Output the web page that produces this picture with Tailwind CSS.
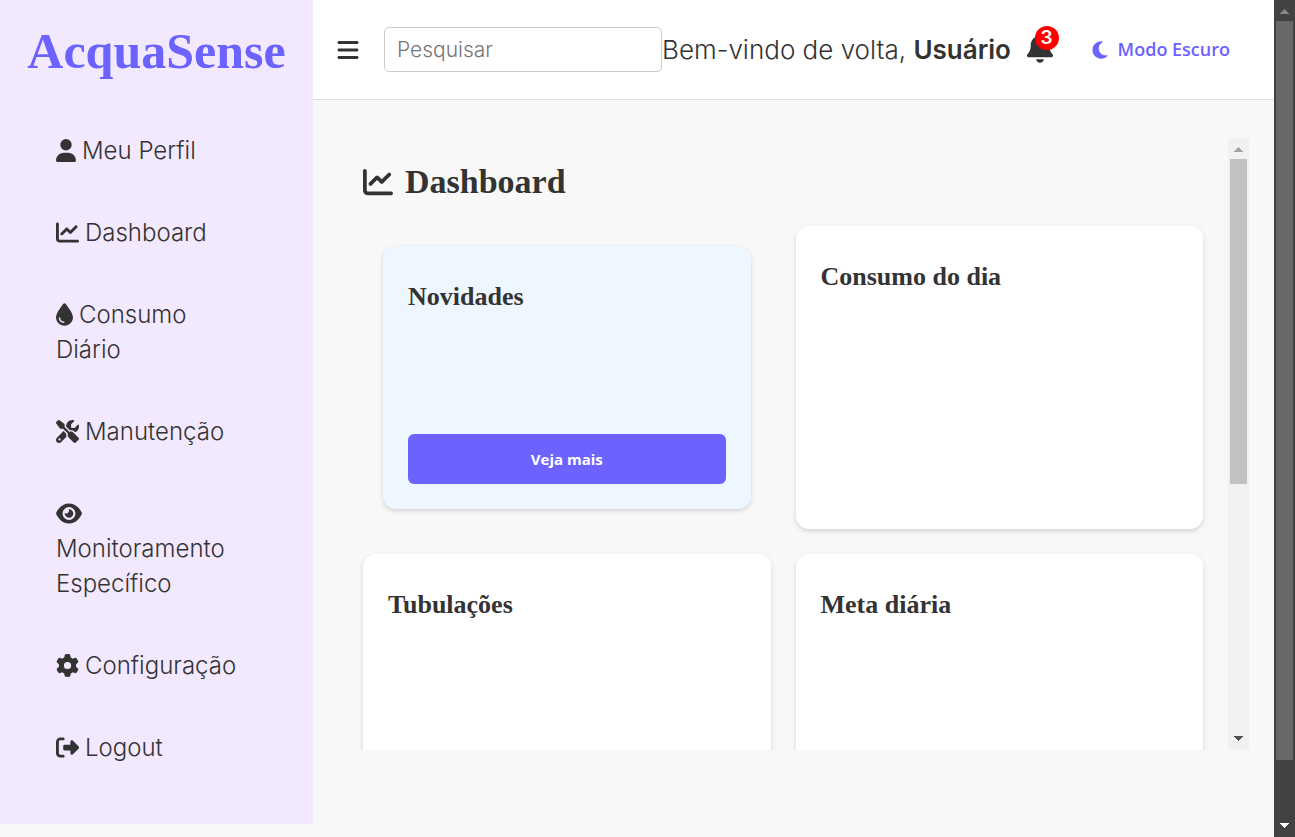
<!DOCTYPE html>
<html lang="pt-BR">
<head>
<meta charset="utf-8">
<meta name="viewport" content="width=device-width, initial-scale=1">
<title>AcquaSense</title>
<script src="https://cdn.jsdelivr.net/npm/@tailwindcss/browser@4"></script>
</head>
<body class="flex h-screen overflow-hidden bg-[#f8f8f8] font-['Inter','Open_Sans',sans-serif] text-[#333]">
<div class="flex min-w-0 flex-1 items-start overflow-hidden">

  <aside class="w-[313px] shrink-0 bg-[#f3e9ff] pb-[59px]">
    <h1 class="pt-5 text-center font-['Liberation_Serif',serif] text-[50px] leading-[63px] font-bold text-[#6c63ff]">AcquaSense</h1>
    <nav class="pt-[50px] pr-12 pl-14 text-[24px] leading-[35px] font-light">
      <ul class="flex flex-col gap-[47px]">
        <li><a href="#"><svg class="mr-[6px] inline-block h-[23px] w-[20px] align-[-3px]" viewBox="0 0 448 512" fill="currentColor"><path d="M224 256A128 128 0 1 0 224 0a128 128 0 1 0 0 256zm-45.700 48C79.800 304 0 383.800 0 482.300C0 498.700 13.300 512 29.700 512H418.300c16.400 0 29.700-13.300 29.700-29.700C448 383.800 368.200 304 269.700 304H178.300z"/></svg>Meu Perfil</a></li>
        <li><a href="#"><svg class="mr-[6px] inline-block h-[23px] w-[23px] align-[-3px]" viewBox="0 0 512 512" fill="currentColor"><path d="M64 64c0-17.700-14.300-32-32-32S0 46.300 0 64V400c0 44.200 35.800 80 80 80H480c17.700 0 32-14.300 32-32s-14.300-32-32-32H80c-8.800 0-16-7.200-16-16V64zm406.600 86.600c12.500-12.500 12.500-32.800 0-45.300s-32.800-12.500-45.300 0L320 210.700l-57.400-57.400c-12.500-12.500-32.800-12.500-45.300 0l-112 112c-12.500 12.500-12.500 32.800 0 45.300s32.800 12.500 45.300 0L240 221.300l57.400 57.400c12.500 12.500 32.800 12.500 45.300 0l128-128z"/></svg>Dashboard</a></li>
        <li><a href="#"><svg class="mr-[6px] inline-block h-[23px] w-[17px] align-[-3px]" viewBox="0 0 384 512" fill="currentColor"><path d="M192 512C86 512 0 426 0 320C0 228.800 130.200 57.700 166.600 11.700C172.600 4.200 181.500 0 191.100 0h1.800c9.600 0 18.500 4.200 24.500 11.700C253.800 57.700 384 228.800 384 320c0 106-86 192-192 192zM96 336c0-8.800-7.200-16-16-16s-16 7.200-16 16c0 61.900 50.100 112 112 112c8.800 0 16-7.200 16-16s-7.200-16-16-16c-44.200 0-80-35.800-80-80z"/></svg>Consumo<br>Diário</a></li>
        <li><a href="#"><svg class="mr-[6px] inline-block h-[23px] w-[23px] align-[-3px]" viewBox="0 0 512 512" fill="currentColor"><path d="M78.600 5C69.100-2.400 55.600-1.500 47 7L7 47c-8.500 8.500-9.400 22-2.100 31.600l80 104c4.500 5.900 11.600 9.400 19 9.400h54.100l109 109c-14.700 29-10 65.400 14.300 89.600l112 112c12.500 12.500 32.800 12.500 45.300 0l64-64c12.500-12.500 12.500-32.800 0-45.300l-112-112c-24.200-24.200-60.600-29-89.600-14.300l-109-109V104c0-7.500-3.500-14.500-9.400-19L78.600 5zM19.900 396.100C7.200 408.800 0 426.100 0 444.100C0 481.600 30.400 512 67.900 512c18 0 35.300-7.200 48-19.900L233.700 374.300c-7.800-20.900-9-43.600-3.600-65.100l-61.700-61.700L19.900 396.100zM512 144c0-10.500-1.100-20.700-3.200-30.500c-2.400-11.200-16.100-14.100-24.200-6l-63.900 63.900c-3 3-7.100 4.700-11.300 4.700H352c-8.800 0-16-7.200-16-16V102.600c0-4.200 1.700-8.300 4.700-11.300l63.900-63.900c8.100-8.100 5.200-21.800-6-24.200C388.700 1.100 378.500 0 368 0C288.500 0 224 64.500 224 144l0 .8 85.300 85.300c36-9.100 75.800 .5 104 28.700L429 274.500c49-23 83-72.800 83-130.500zM56 432a24 24 0 1 1 48 0 24 24 0 1 1 -48 0z"/></svg>Manutenção</a></li>
        <li><a href="#"><svg class="inline-block h-[23px] w-[26px] align-[-3px]" viewBox="0 0 576 512" fill="currentColor"><path d="M288 32c-80.800 0-145.500 36.800-192.600 80.600C48.600 156 17.300 208 2.500 243.700c-3.300 7.900-3.300 16.700 0 24.600C17.300 304 48.600 356 95.400 399.400C142.500 443.200 207.200 480 288 480s145.500-36.800 192.600-80.600c46.800-43.500 78.100-95.400 93-131.100c3.300-7.900 3.300-16.700 0-24.600c-14.900-35.700-46.200-87.700-93-131.100C433.500 68.800 368.800 32 288 32zM144 256a144 144 0 1 1 288 0 144 144 0 1 1 -288 0zm144-64c0 35.300-28.700 64-64 64c-7.100 0-13.900-1.200-20.300-3.300c-5.500-1.800-11.900 1.600-11.700 7.400c.3 6.900 1.300 13.800 3.200 20.700c13.700 51.200 66.400 81.600 117.600 67.900s81.600-66.400 67.900-117.600c-11.100-41.500-47.800-69.400-88.600-71.100c-5.800-.2-9.200 6.100-7.400 11.700c2.100 6.400 3.300 13.200 3.300 20.300z"/></svg><br>Monitoramento<br>Específico</a></li>
        <li><a href="#"><svg class="mr-[6px] inline-block h-[23px] w-[23px] align-[-3px]" viewBox="0 0 512 512" fill="currentColor"><path d="M495.900 166.600c3.200 8.700 .5 18.400-6.400 24.600l-43.300 39.400c1.100 8.300 1.700 16.800 1.700 25.400s-.6 17.100-1.700 25.400l43.300 39.400c6.900 6.200 9.600 15.900 6.400 24.600c-4.400 11.900-9.700 23.300-15.800 34.300l-4.700 8.100c-6.600 11-14 21.400-22.100 31.200c-5.900 7.200-15.700 9.600-24.500 6.800l-55.700-17.700c-13.400 10.300-28.200 18.900-44 25.400l-12.500 57.100c-2 9.100-9 16.300-18.200 17.800c-13.800 2.300-28 3.500-42.500 3.500s-28.700-1.200-42.500-3.500c-9.200-1.500-16.200-8.700-18.200-17.800l-12.500-57.100c-15.800-6.500-30.600-15.100-44-25.400L83.100 425.900c-8.800 2.800-18.600 .3-24.500-6.800c-8.100-9.800-15.500-20.200-22.100-31.200l-4.700-8.100c-6.100-11-11.400-22.400-15.800-34.300c-3.200-8.700-.5-18.400 6.400-24.600l43.300-39.400C64.600 273.100 64 264.600 64 256s.6-17.100 1.700-25.400L22.400 191.200c-6.900-6.200-9.600-15.900-6.400-24.600c4.400-11.900 9.700-23.300 15.800-34.300l4.700-8.100c6.600-11 14-21.400 22.100-31.200c5.900-7.200 15.700-9.600 24.500-6.800l55.700 17.700c13.400-10.300 28.200-18.900 44-25.400l12.500-57.100c2-9.100 9-16.300 18.200-17.800C227.300 1.200 241.500 0 256 0s28.700 1.200 42.500 3.500c9.200 1.500 16.200 8.700 18.200 17.800l12.500 57.100c15.800 6.500 30.600 15.100 44 25.400l55.700-17.700c8.800-2.800 18.600-.3 24.500 6.800c8.100 9.800 15.500 20.200 22.100 31.200l4.700 8.100c6.100 11 11.400 22.400 15.800 34.300zM256 336a80 80 0 1 0 0-160 80 80 0 1 0 0 160z"/></svg>Configuração</a></li>
        <li><a href="#"><svg class="mr-[6px] inline-block h-[23px] w-[23px] align-[-3px]" viewBox="0 0 512 512" fill="currentColor"><path d="M377.900 105.900L500.700 228.700c7.200 7.200 11.300 17.100 11.300 27.300s-4.100 20.100-11.300 27.300L377.900 406.100c-6.400 6.400-15 9.900-24 9.900c-18.700 0-33.900-15.200-33.900-33.900l0-62.100-128 0c-17.700 0-32-14.300-32-32l0-64c0-17.700 14.300-32 32-32l128 0 0-62.100c0-18.700 15.200-33.900 33.900-33.900c9 0 17.600 3.600 24 9.900zM160 96L96 96c-17.700 0-32 14.300-32 32l0 256c0 17.700 14.300 32 32 32l64 0c17.700 0 32 14.300 32 32s-14.300 32-32 32l-64 0c-53 0-96-43-96-96L0 128C0 75 43 32 96 32l64 0c17.700 0 32 14.300 32 32s-14.300 32-32 32z"/></svg>Logout</a></li>
      </ul>
    </nav>
  </aside>

  <div class="min-w-0 flex-1">
    <header class="flex h-[100px] items-center border-b border-[#ddd] bg-white px-6">
      <button type="button" aria-label="Abrir menu" class="mr-[25px]"><svg class="h-6 w-[22px]" viewBox="0 0 448 512" fill="currentColor"><path d="M0 96C0 78.300 14.300 64 32 64H416c17.700 0 32 14.300 32 32s-14.300 32-32 32H32C14.300 128 0 113.700 0 96zM0 256c0-17.700 14.300-32 32-32H416c17.700 0 32 14.300 32 32s-14.300 32-32 32H32c-17.700 0-32-14.300-32-32zM448 416c0 17.700-14.300 32-32 32H32c-17.700 0-32-14.300-32-32s14.300-32 32-32H416c17.700 0 32 14.300 32 32z"/></svg></button>
      <input type="search" aria-label="Pesquisar" placeholder="Pesquisar" class="h-[45px] w-[278px] rounded-[5px] border border-[#ccc] bg-white px-3 text-[21px] font-light placeholder:text-[#757575]">
      <p class="text-[26px] font-light whitespace-nowrap">Bem-vindo de volta, <strong class="font-semibold">Usuário</strong></p>
      <div class="ml-auto flex items-center">
        <button type="button" aria-label="Notificações" class="relative mr-[39px] pb-1"><svg class="h-[30px] w-[26px]" viewBox="0 0 448 512" fill="currentColor"><path d="M224 0c-17.700 0-32 14.300-32 32V51.200C119 66 64 130.600 64 208v18.800c0 47-17.300 92.400-48.500 127.600l-7.400 8.300c-8.400 9.400-10.400 22.900-5.300 34.400S19.400 416 32 416H416c12.600 0 24-7.400 29.200-18.900s3.100-25-5.300-34.400l-7.400-8.300C401.300 319.200 384 273.900 384 226.800V208c0-77.400-55-142-128-156.800V32c0-17.700-14.300-32-32-32zm45.300 493.300c12-12 18.700-28.300 18.700-45.300H224 160c0 17 6.700 33.300 18.700 45.300s28.300 18.700 45.300 18.700s33.300-6.700 45.300-18.700z"/></svg><span class="absolute -top-[7px] -right-[6px] flex size-6 items-center justify-center rounded-full bg-[#f00] text-[19px] leading-none font-semibold text-white">3</span></button>
        <button type="button" class="mr-5 flex items-center gap-[10px] font-['Open_Sans',sans-serif] text-[18px] font-semibold whitespace-nowrap text-[#6c63ff]"><svg class="h-5 w-4" viewBox="0 0 384 512" fill="currentColor"><path d="M223.500 32C100 32 0 132.300 0 256S100 480 223.500 480c60.600 0 115.500-24.200 155.800-63.400c5-4.900 6.300-12.500 3.100-18.700s-10.100-9.700-17-8.500c-9.800 1.700-19.800 2.600-30.100 2.600c-96.900 0-175.500-78.800-175.500-176c0-65.800 36-123.100 89.300-153.300c6.100-3.500 9.200-10.500 7.700-17.300s-7.300-11.900-14.300-12.500c-6.300-.5-12.600-.8-19-.8z"/></svg>Modo Escuro</button>
      </div>
    </header>

    <main class="px-[25px] pt-[38px]">
      <div class="flex h-[612px]">
        <div class="min-w-0 flex-1 overflow-hidden px-[25px] pt-[25px]">
          <h2 class="flex items-center gap-3 font-['Liberation_Serif',serif] text-[34px] leading-[38px] font-bold"><svg class="size-[30px]" viewBox="0 0 512 512" fill="currentColor"><path d="M64 64c0-17.700-14.300-32-32-32S0 46.300 0 64V400c0 44.200 35.800 80 80 80H480c17.700 0 32-14.300 32-32s-14.300-32-32-32H80c-8.800 0-16-7.200-16-16V64zm406.600 86.600c12.500-12.500 12.500-32.800 0-45.300s-32.800-12.500-45.300 0L320 210.700l-57.400-57.400c-12.500-12.500-32.800-12.500-45.300 0l-112 112c-12.500 12.500-12.500 32.800 0 45.300s32.800 12.500 45.300 0L240 221.300l57.400 57.400c12.500 12.500 32.800 12.500 45.300 0l128-128z"/></svg>Dashboard</h2>
          <div class="mt-[25px] grid auto-rows-[303px] grid-cols-2 gap-[25px] font-['Liberation_Serif',serif] text-[26px] leading-[30px] font-bold">
            <section class="m-5 flex flex-col rounded-[13px] bg-[#eef6ff] p-[25px] shadow-[0_2px_5px_rgba(0,0,0,0.15)]">
              <h3 class="pt-[11px]">Novidades</h3>
              <button type="button" class="mt-auto h-[50px] rounded-[6px] bg-[#6c63ff] font-['Open_Sans',sans-serif] text-[15px] font-bold text-white">Veja mais</button>
            </section>
            <section class="rounded-[13px] bg-white p-[25px] shadow-[0_2px_5px_rgba(0,0,0,0.15)]"><h3 class="pt-[11px]">Consumo do dia</h3></section>
            <section class="rounded-[13px] bg-white p-[25px] shadow-[0_2px_5px_rgba(0,0,0,0.15)]"><h3 class="pt-[11px]">Tubulações</h3></section>
            <section class="rounded-[13px] bg-white p-[25px] shadow-[0_2px_5px_rgba(0,0,0,0.15)]"><h3 class="pt-[11px]">Meta diária</h3></section>
          </div>
        </div>
        <!-- Panel scrollbar -->
        <div class="flex w-[21px] shrink-0 flex-col items-center bg-[#f1f1f1]" aria-hidden="true">
          <div class="flex h-[21px] items-center justify-center pt-[2px]"><svg class="h-[5px] w-[9px]" viewBox="0 0 9 5" fill="#a3a3a3" shape-rendering="crispEdges"><path d="M4 0h1v1h1v1h1v1h1v1h1v1H0V4h1V3h1V2h1V1h1z"/></svg></div>
          <div class="h-[325px] w-[17px] bg-[#c1c1c1]"></div>
          <div class="mt-auto flex h-[21px] items-center justify-center pb-[2px]"><svg class="h-[5px] w-[9px]" viewBox="0 0 9 5" fill="#505050" shape-rendering="crispEdges"><path d="M0 0h9v1H8v1H7v1H6v1H5v1H4V4H3V3H2V2H1V1H0z"/></svg></div>
        </div>
      </div>
    </main>
  </div>
</div>

<!-- Window scrollbar -->
<div class="flex w-[21px] shrink-0 flex-col items-center bg-[#424242]" aria-hidden="true">
  <div class="flex h-[21px] items-center justify-center pt-[2px]"><svg class="h-[5px] w-[9px]" viewBox="0 0 9 5" fill="#858585" shape-rendering="crispEdges"><path d="M4 0h1v1h1v1h1v1h1v1h1v1H0V4h1V3h1V2h1V1h1z"/></svg></div>
  <div class="h-[739px] w-[17px] bg-[#686868]"></div>
  <div class="mt-auto flex h-[21px] items-center justify-center pb-[2px]"><svg class="h-[5px] w-[9px]" viewBox="0 0 9 5" fill="#fff" shape-rendering="crispEdges"><path d="M0 0h9v1H8v1H7v1H6v1H5v1H4V4H3V3H2V2H1V1H0z"/></svg></div>
</div>
</body>
</html>
